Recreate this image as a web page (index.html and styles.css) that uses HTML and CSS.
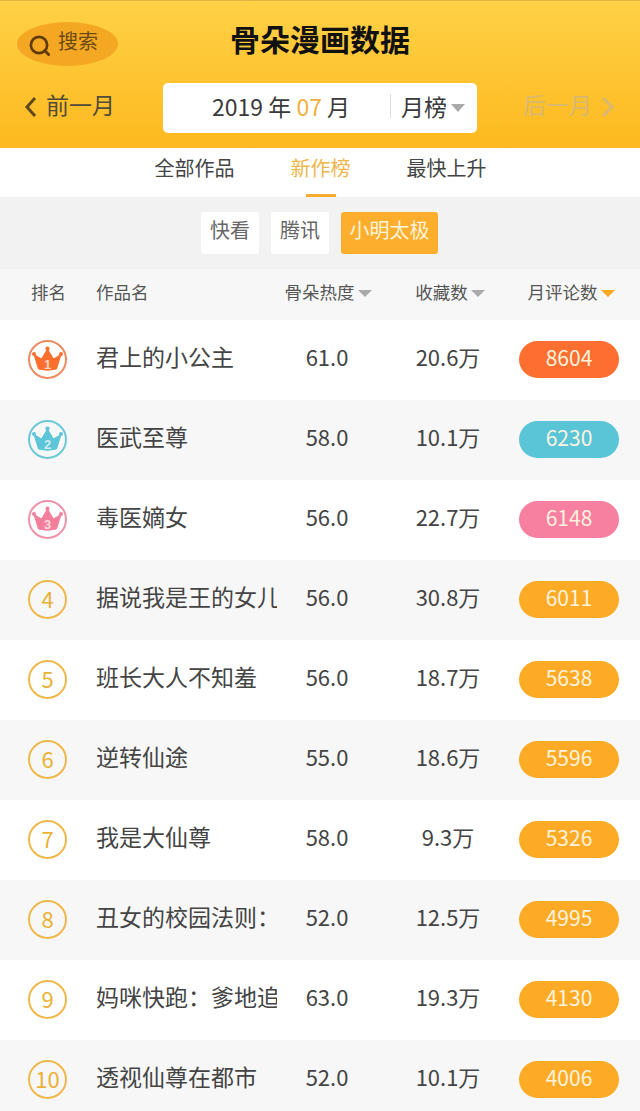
FILE: index.html
```html
<!DOCTYPE html>
<html lang="zh-CN">
  <head>
    <meta charset="UTF-8" />
    <meta name="viewport" content="width=device-width, initial-scale=1.0" />
    <title>骨朵漫画数据</title>
    <link rel="stylesheet" href="styles.css">
  </head>
  <body>
    <svg class="defs" width="0" height="0">
      <symbol id="crown" viewBox="0 0 35 35">
        <path d="M17.5 7 L23.5 17 L31 12.5 L26.5 27 Q17.5 29.5 8.5 27 L4 12.5 L11.5 17 Z" fill="currentColor" stroke="currentColor" stroke-width="1" stroke-linejoin="round" />
        <circle cx="17.5" cy="6.5" r="2.1" fill="currentColor" />
        <circle cx="4" cy="12" r="2" fill="currentColor" />
        <circle cx="31" cy="12" r="2" fill="currentColor" />
      </symbol>
    </svg>
    <header class="top">
      <div class="top-row">
        <div class="search">
          <svg class="search-icon" width="23" height="23" viewBox="0 0 24 24">
            <circle cx="11.5" cy="11.5" r="8.5" fill="none" stroke="#5f3b0a" stroke-width="2.8" />
            <path d="M17.5 17.5 L21.5 21.5" stroke="#5f3b0a" stroke-width="3" stroke-linecap="round" />
          </svg>
          <span>搜索</span>
        </div>
        <h1>骨朵漫画数据</h1>
      </div>
      <div class="date-row">
        <div class="month-link">
          <svg width="13" height="22" viewBox="0 0 13 22"><path d="M11 2 L3 11 L11 20" fill="none" stroke="#5f4a1e" stroke-width="3" /></svg>
          <span>前一月</span>
        </div>
        <div class="date-box">
          <div class="date-text">2019 年 <em>07</em> 月</div>
          <div class="date-type">月榜<i class="arrow"></i></div>
        </div>
        <div class="month-link next">
          <span>后一月</span>
          <svg width="14" height="22" viewBox="0 0 14 22"><path d="M2 2 L11 11 L2 20" fill="none" stroke="#d8b872" stroke-width="3" /></svg>
        </div>
      </div>
    </header>
    <nav class="tabs">
      <a>全部作品</a>
      <a class="active">新作榜</a>
      <a>最快上升</a>
    </nav>
    <div class="filters">
      <button>快看</button>
      <button>腾讯</button>
      <button class="on">小明太极</button>
    </div>
    <div class="row head">
      <div class="rank-title">排名</div>
      <div>作品名</div>
      <div class="mid">骨朵热度<i class="arrow"></i></div>
      <div class="mid">收藏数<i class="arrow"></i></div>
      <div class="mid">月评论数<i class="arrow hot"></i></div>
    </div>
    <main class="list">
      <div class="row">
        <div class="rank top1"><svg width="35" height="35"><use href="#crown" /></svg><b>1</b></div>
        <div class="name">君上的小公主</div><div class="mid">61.0</div><div class="mid">20.6万</div>
        <div class="count top1">8604</div>
      </div>
      <div class="row">
        <div class="rank top2"><svg width="35" height="35"><use href="#crown" /></svg><b>2</b></div>
        <div class="name">医武至尊</div><div class="mid">58.0</div><div class="mid">10.1万</div>
        <div class="count top2">6230</div>
      </div>
      <div class="row">
        <div class="rank top3"><svg width="35" height="35"><use href="#crown" /></svg><b>3</b></div>
        <div class="name">毒医嫡女</div><div class="mid">56.0</div><div class="mid">22.7万</div>
        <div class="count top3">6148</div>
      </div>
      <div class="row">
        <div class="rank">4</div>
        <div class="name">据说我是王的女儿</div><div class="mid">56.0</div><div class="mid">30.8万</div>
        <div class="count">6011</div>
      </div>
      <div class="row">
        <div class="rank">5</div>
        <div class="name">班长大人不知羞</div><div class="mid">56.0</div><div class="mid">18.7万</div>
        <div class="count">5638</div>
      </div>
      <div class="row">
        <div class="rank">6</div>
        <div class="name">逆转仙途</div><div class="mid">55.0</div><div class="mid">18.6万</div>
        <div class="count">5596</div>
      </div>
      <div class="row">
        <div class="rank">7</div>
        <div class="name">我是大仙尊</div><div class="mid">58.0</div><div class="mid">9.3万</div>
        <div class="count">5326</div>
      </div>
      <div class="row">
        <div class="rank">8</div>
        <div class="name">丑女的校园法则：</div><div class="mid">52.0</div><div class="mid">12.5万</div>
        <div class="count">4995</div>
      </div>
      <div class="row">
        <div class="rank">9</div>
        <div class="name">妈咪快跑：爹地追</div><div class="mid">63.0</div><div class="mid">19.3万</div>
        <div class="count">4130</div>
      </div>
      <div class="row">
        <div class="rank">10</div>
        <div class="name">透视仙尊在都市</div><div class="mid">52.0</div><div class="mid">10.1万</div>
        <div class="count">4006</div>
      </div>
    </main>
  </body>
</html>
```

FILE: styles.css
```css
* {
  margin: 0;
  padding: 0;
  box-sizing: border-box;
}
html,
body {
  height: 1111px;
  overflow: hidden;
}
body {
  background-color: #fff;
  color: #444;
  font-family: "Noto Sans CJK SC", "Noto Sans", sans-serif;
}
.defs {
  display: block;
  height: 0;
}
.top {
  height: 148px;
  padding: 21px 17px 0;
  background: linear-gradient(#ffd146, #fdb91f);
  border-top: 1px solid #e0b640;
}
.top-row {
  display: grid;
  grid-template-columns: 101px 1fr 101px;
  height: 44px;
}
.search {
  display: flex;
  align-items: center;
  gap: 7px;
  height: 44px;
  padding-left: 11px;
  border-radius: 50%;
  background-color: #f4a723;
  color: #6b4a14;
  font-size: 20px;
  line-height: 1;
}
.search span {
  margin-top: -7px;
}
.search-icon {
  margin-top: 2px;
}
h1 {
  font-size: 30px;
  line-height: 32px;
  font-weight: 700;
  text-align: center;
  color: #111;
}
.date-row {
  display: flex;
  align-items: center;
  justify-content: space-between;
  margin-top: 17px;
  padding: 0 8px 0 7px;
}
.month-link {
  display: flex;
  align-items: center;
  gap: 9px;
  font-size: 23px;
  line-height: 50px;
  color: #4f4a3c;
}
.month-link span {
  margin-top: -8px;
}
.month-link svg {
  margin-top: -2px;
}
.next {
  color: #d8b872;
}
.date-box {
  display: flex;
  align-items: center;
  width: 314px;
  height: 50px;
  margin-left: 2px;
  padding-bottom: 5px;
  border-radius: 5px;
  background-color: #fff;
  font-size: 23px;
  color: #3a3a3a;
}
.date-text {
  width: 227px;
  padding-left: 49px;
  white-space: nowrap;
}
.date-text em {
  font-style: normal;
  color: #f0b040;
}
.date-type {
  display: flex;
  align-items: center;
  height: 24px;
  padding-left: 10px;
  border-left: 1px solid #ddd;
  white-space: nowrap;
}
.arrow {
  display: inline-block;
  width: 0;
  height: 0;
  margin-left: 4px;
  margin-top: 4px;
  border-style: solid;
  border-width: 8px 7px 0;
  border-color: #aaa transparent transparent;
}
.arrow.hot {
  border-top-color: #fda91f;
}
.tabs {
  display: flex;
  justify-content: center;
  gap: 56px;
  height: 49px;
  padding-left: 1px;
  font-size: 20px;
  line-height: 40px;
  color: #444;
}
.tabs a {
  position: relative;
}
.tabs .active {
  color: #eeb64a;
}
.tabs .active::after {
  content: "";
  position: absolute;
  left: 15px;
  bottom: 0;
  width: 30px;
  height: 3px;
  background-color: #f9ab2e;
}
.filters {
  display: flex;
  justify-content: center;
  gap: 12px;
  height: 72px;
  padding: 15px 1px 0 0;
  background-color: #f2f2f2;
}
.filters button {
  width: 58px;
  height: 42px;
  border: none;
  border-radius: 3px;
  background-color: #fff;
  color: #666;
  font: inherit;
  font-size: 20px;
  line-height: 34px;
  padding-bottom: 6px;
}
.filters .on {
  width: 97px;
  background-color: #fdae2c;
  color: #fff4dc;
}
.row {
  display: grid;
  grid-template-columns: 96px 181px 100px 142px 100px;
  align-items: center;
  height: 80px;
  padding-bottom: 2px;
  font-size: 22px;
}
.row.head {
  height: 51px;
  padding-bottom: 6px;
  background-color: #f7f7f7;
  font-size: 17.5px;
  color: #555;
}
.rank-title {
  padding-left: 31px;
}
.head .mid {
  display: flex;
  align-items: center;
  justify-content: center;
  margin: 0;
  white-space: nowrap;
}
.head .arrow {
  margin-left: 3px;
  border-width: 7px 7px 0;
}
.head .mid:nth-child(3) {
  transform: translateX(1px);
}
.head .mid:nth-child(4) {
  transform: translateX(2px);
}
.head .mid:nth-child(5) {
  transform: translateX(2px);
}
.list .row:nth-child(even) {
  background-color: #f7f7f7;
}
.rank {
  position: relative;
  display: flex;
  align-items: center;
  justify-content: center;
  width: 39px;
  height: 39px;
  margin-left: 28px;
  padding-bottom: 3px;
  border: 2px solid #eeb84a;
  border-radius: 50%;
  color: #e9b136;
  font-size: 22px;
  line-height: 1;
}
.rank svg {
  flex: none;
  margin-top: 3px;
}
.rank.top1 {
  border-color: #ec8a62;
  color: #fa6f2e;
}
.rank.top2 {
  border-color: #6cc8d8;
  color: #5cc5d8;
}
.rank.top3 {
  border-color: #ec93a8;
  color: #f47f9c;
}
.rank b {
  position: absolute;
  left: 0;
  right: 0;
  top: 16px;
  text-align: center;
  font-family: "Liberation Sans", sans-serif;
  font-size: 13px;
  line-height: 13px;
  font-weight: 700;
  color: #fff;
  opacity: 0.7;
}
.name {
  overflow: hidden;
  margin-bottom: 6px;
  white-space: nowrap;
  font-size: 23px;
}
.mid {
  margin-bottom: 6px;
  text-align: center;
}
.count {
  height: 37px;
  border-radius: 18.5px;
  background-color: #fdab26;
  color: #fff3df;
  font-size: 21px;
  line-height: 33px;
  text-align: center;
}
.count.top1 {
  background-color: #fc6f31;
}
.count.top2 {
  background-color: #5bc5d8;
}
.count.top3 {
  background-color: #f77f9f;
}
```
